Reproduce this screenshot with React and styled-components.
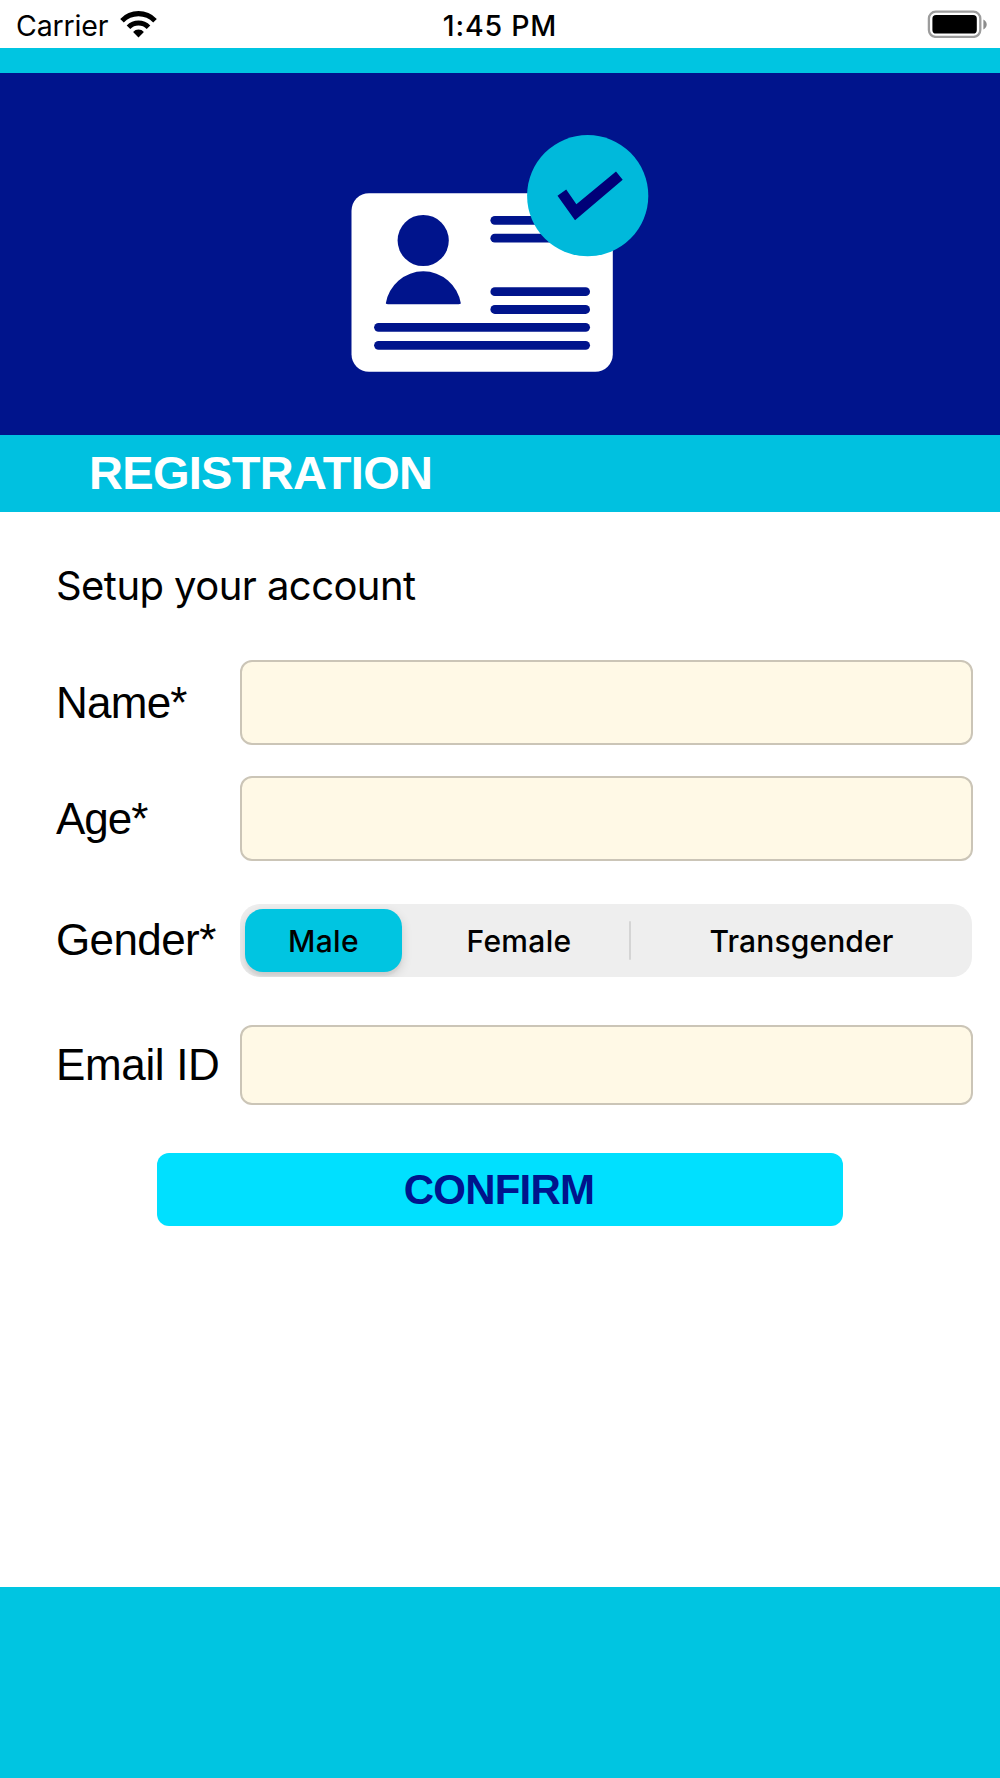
import React, { useState } from "react";
import styled, { createGlobalStyle } from "styled-components";

const GlobalStyle = createGlobalStyle`
  * { box-sizing: border-box; }
  body { margin: 0; background: #fff; }
`;

const system = `Inter, "Liberation Sans", sans-serif`;
const helvetica = `"Liberation Sans", Arial, sans-serif`;

const Screen = styled.div`
  display: flex;
  flex-direction: column;
  width: 1000px;
  height: 1778px;
  background: #fff;
  color: #000;
  font-family: ${system};
`;

const StatusBar = styled.header`
  display: grid;
  grid-template-columns: 1fr auto 1fr;
  align-items: center;
  height: 48px;
  padding: 3px 13px 0 16px;
  flex: none;
`;

const Carrier = styled.div`
  display: flex;
  align-items: center;
  gap: 12px;
  font-size: 28.5px;
  line-height: 34px;
  letter-spacing: -0.15px;
`;

const WifiIcon = styled.svg`
  width: 38px;
  height: 28px;
  margin-top: -3px;
`;

const Clock = styled.div`
  font-size: 28.5px;
  font-weight: 500;
  line-height: 34px;
  letter-spacing: 0.8px;
  margin-right: 3px;
`;

const BatteryIcon = styled.svg`
  width: 60px;
  height: 28px;
  margin-top: -3px;
  justify-self: end;
`;

const TopStrip = styled.div`
  height: 25px;
  background: #00c5e1;
  flex: none;
`;

const Hero = styled.div`
  display: flex;
  justify-content: center;
  height: 362px;
  padding-top: 62px;
  background: #00148c;
  flex: none;
`;

const Badge = styled.svg`
  width: 298px;
  height: 238px;
`;

const TitleBar = styled.h1`
  display: flex;
  align-items: center;
  height: 77px;
  margin: 0;
  padding: 0 0 2px 89px;
  background: #00c1e0;
  color: #fff;
  font: 700 47px/74px ${helvetica};
  letter-spacing: -0.7px;
  flex: none;
`;

const Form = styled.form`
  display: flex;
  flex-direction: column;
  flex: 1;
  padding: 49px 27px 0 56px;
`;

const Intro = styled.p`
  margin: 0 0 50px;
  font-size: 40px;
  line-height: 49px;
  letter-spacing: -0.56px;
`;

const Field = styled.label`
  display: grid;
  grid-template-columns: 184px 1fr;
  align-items: center;
  height: ${(p) => p.$height}px;
  margin-bottom: ${(p) => p.$gap}px;
`;

const Label = styled.span`
  font: 400 44px/50px ${helvetica};
  letter-spacing: ${(p) => p.$tracking}px;
  white-space: nowrap;
  padding-bottom: ${(p) => p.$lift || 0}px;
`;

const Input = styled.input`
  width: 100%;
  height: 100%;
  padding: 0 16px;
  border: 2px solid #cbc5b7;
  border-radius: 12px;
  background: #fff9e6;
  font: 400 36px ${system};
  outline: none;
`;

const Segments = styled.div`
  display: grid;
  grid-template-columns: 157px 227px 2px 1fr;
  align-items: center;
  width: 732px;
  height: 73px;
  padding: 5px;
  border-radius: 20px;
  background: #eeeeee;
  overflow: hidden;
`;

const Segment = styled.button`
  height: 63px;
  margin: 0;
  padding: 0 0 0 ${(p) => p.$inset || 0}px;
  border: 0;
  border-radius: 18px;
  background: ${(p) => (p.$active ? "#00c5e1" : "transparent")};
  box-shadow: ${(p) => (p.$active ? "0 4px 11px rgba(0, 0, 0, 0.14), 0 4px 2px rgba(0, 0, 0, 0.04)" : "none")};
  color: #000;
  font: 500 30px/36px ${system};
  letter-spacing: ${(p) => p.$tracking}px;
`;

const Divider = styled.span`
  height: 39px;
  border-radius: 1px;
  background: #d4d4d4;
`;

const Confirm = styled.button`
  width: 686px;
  height: 73px;
  margin: 0 0 0 101px;
  padding: 0 2px 0 0;
  border: 0;
  border-radius: 12px;
  background: #00e0ff;
  color: #00148c;
  font: 700 42px/73px ${helvetica};
  letter-spacing: -0.8px;
`;

const Footer = styled.footer`
  height: 191px;
  background: #00c5e1;
  flex: none;
`;

const genders = ["Male", "Female", "Transgender"];

export default function App() {
  const [gender, setGender] = useState("Male");
  const segment = (name, tracking, inset) => (
    <Segment
      type="button"
      $active={gender === name}
      $tracking={tracking}
      $inset={inset}
      onClick={() => setGender(name)}
    >
      {name}
    </Segment>
  );

  return (
    <>
      <GlobalStyle />
      <Screen>
        <StatusBar>
          <Carrier>
            Carrier
            <WifiIcon viewBox="120 9.5 38 28">
              <path d="M120.2 18.4A25.3 25.3 0 0 1 156.8 18.4L153.2 22A20.2 20.2 0 0 0 123.8 22Z" />
              <path d="M126.7 24.9A16.4 16.4 0 0 1 150.3 24.9L146.7 28.5A11.4 11.4 0 0 0 130.3 28.5Z" />
              <path d="M133.1 31.4A7.5 7.5 0 0 1 143.9 31.4L138.5 36.9Z" />
            </WifiIcon>
          </Carrier>
          <Clock>1:45 PM</Clock>
          <BatteryIcon viewBox="927.5 10 60 28">
            <rect x="929.4" y="11.7" width="51.4" height="25.2" rx="6.8" fill="none" stroke="#9c9c9c" strokeWidth="2.3" />
            <rect x="932.9" y="15.1" width="44.4" height="18.4" rx="3.6" />
            <path d="M983.9 19.4Q987.2 21.200 987.2 24.4T983.9 29.4Z" fill="#8c8c8c" />
          </BatteryIcon>
        </StatusBar>
        <TopStrip />
        <Hero>
          <Badge viewBox="351 135 298 238">
            <rect x="351.5" y="193.2" width="261.3" height="178.6" rx="17.5" fill="#fff" />
            <g fill="#00148c">
              <circle cx="423.2" cy="240.5" r="25.6" />
              <path d="M385.8 303.2A38 38 0 0 1 460.8 303.2Q460.6 304.3 457 304.3H389.5Q386 304.3 385.8 303.2Z" />
              <rect x="490.4" y="215.9" width="99.6" height="8.9" rx="4.45" />
              <rect x="490.4" y="233.7" width="99.6" height="8.9" rx="4.45" />
              <rect x="490.4" y="287.2" width="99.6" height="8.9" rx="4.45" />
              <rect x="490.4" y="305" width="99.6" height="8.9" rx="4.45" />
              <rect x="374.1" y="322.9" width="215.9" height="8.9" rx="4.45" />
              <rect x="374.1" y="340.9" width="215.9" height="8.9" rx="4.45" />
            </g>
            <circle cx="587.7" cy="195.7" r="60.6" fill="#00b9db" />
            <path d="M557.5 195.7 566.2 189.5 576.4 204.3 616 171.5 622.7 179.7 575 220.2Z" fill="#000078" />
          </Badge>
        </Hero>
        <TitleBar>REGISTRATION</TitleBar>
        <Form onSubmit={(e) => e.preventDefault()}>
          <Intro>Setup your account</Intro>
          <Field $height={85} $gap={31}>
            <Label $tracking={-0.75}>Name*</Label>
            <Input />
          </Field>
          <Field $height={85} $gap={43}>
            <Label $tracking={-1}>Age*</Label>
            <Input />
          </Field>
          <Field as="div" $height={73} $gap={48}>
            <Label $tracking={-0.6} $lift={2}>Gender*</Label>
            <Segments role="group">
              {segment(genders[0], 0.3, 0)}
              {segment(genders[1], 0.3, 7)}
              <Divider />
              {segment(genders[2], 0.13, 5)}
            </Segments>
          </Field>
          <Field $height={80} $gap={48}>
            <Label $tracking={-0.35}>Email ID</Label>
            <Input />
          </Field>
          <Confirm type="submit">CONFIRM</Confirm>
        </Form>
        <Footer />
      </Screen>
    </>
  );
}
